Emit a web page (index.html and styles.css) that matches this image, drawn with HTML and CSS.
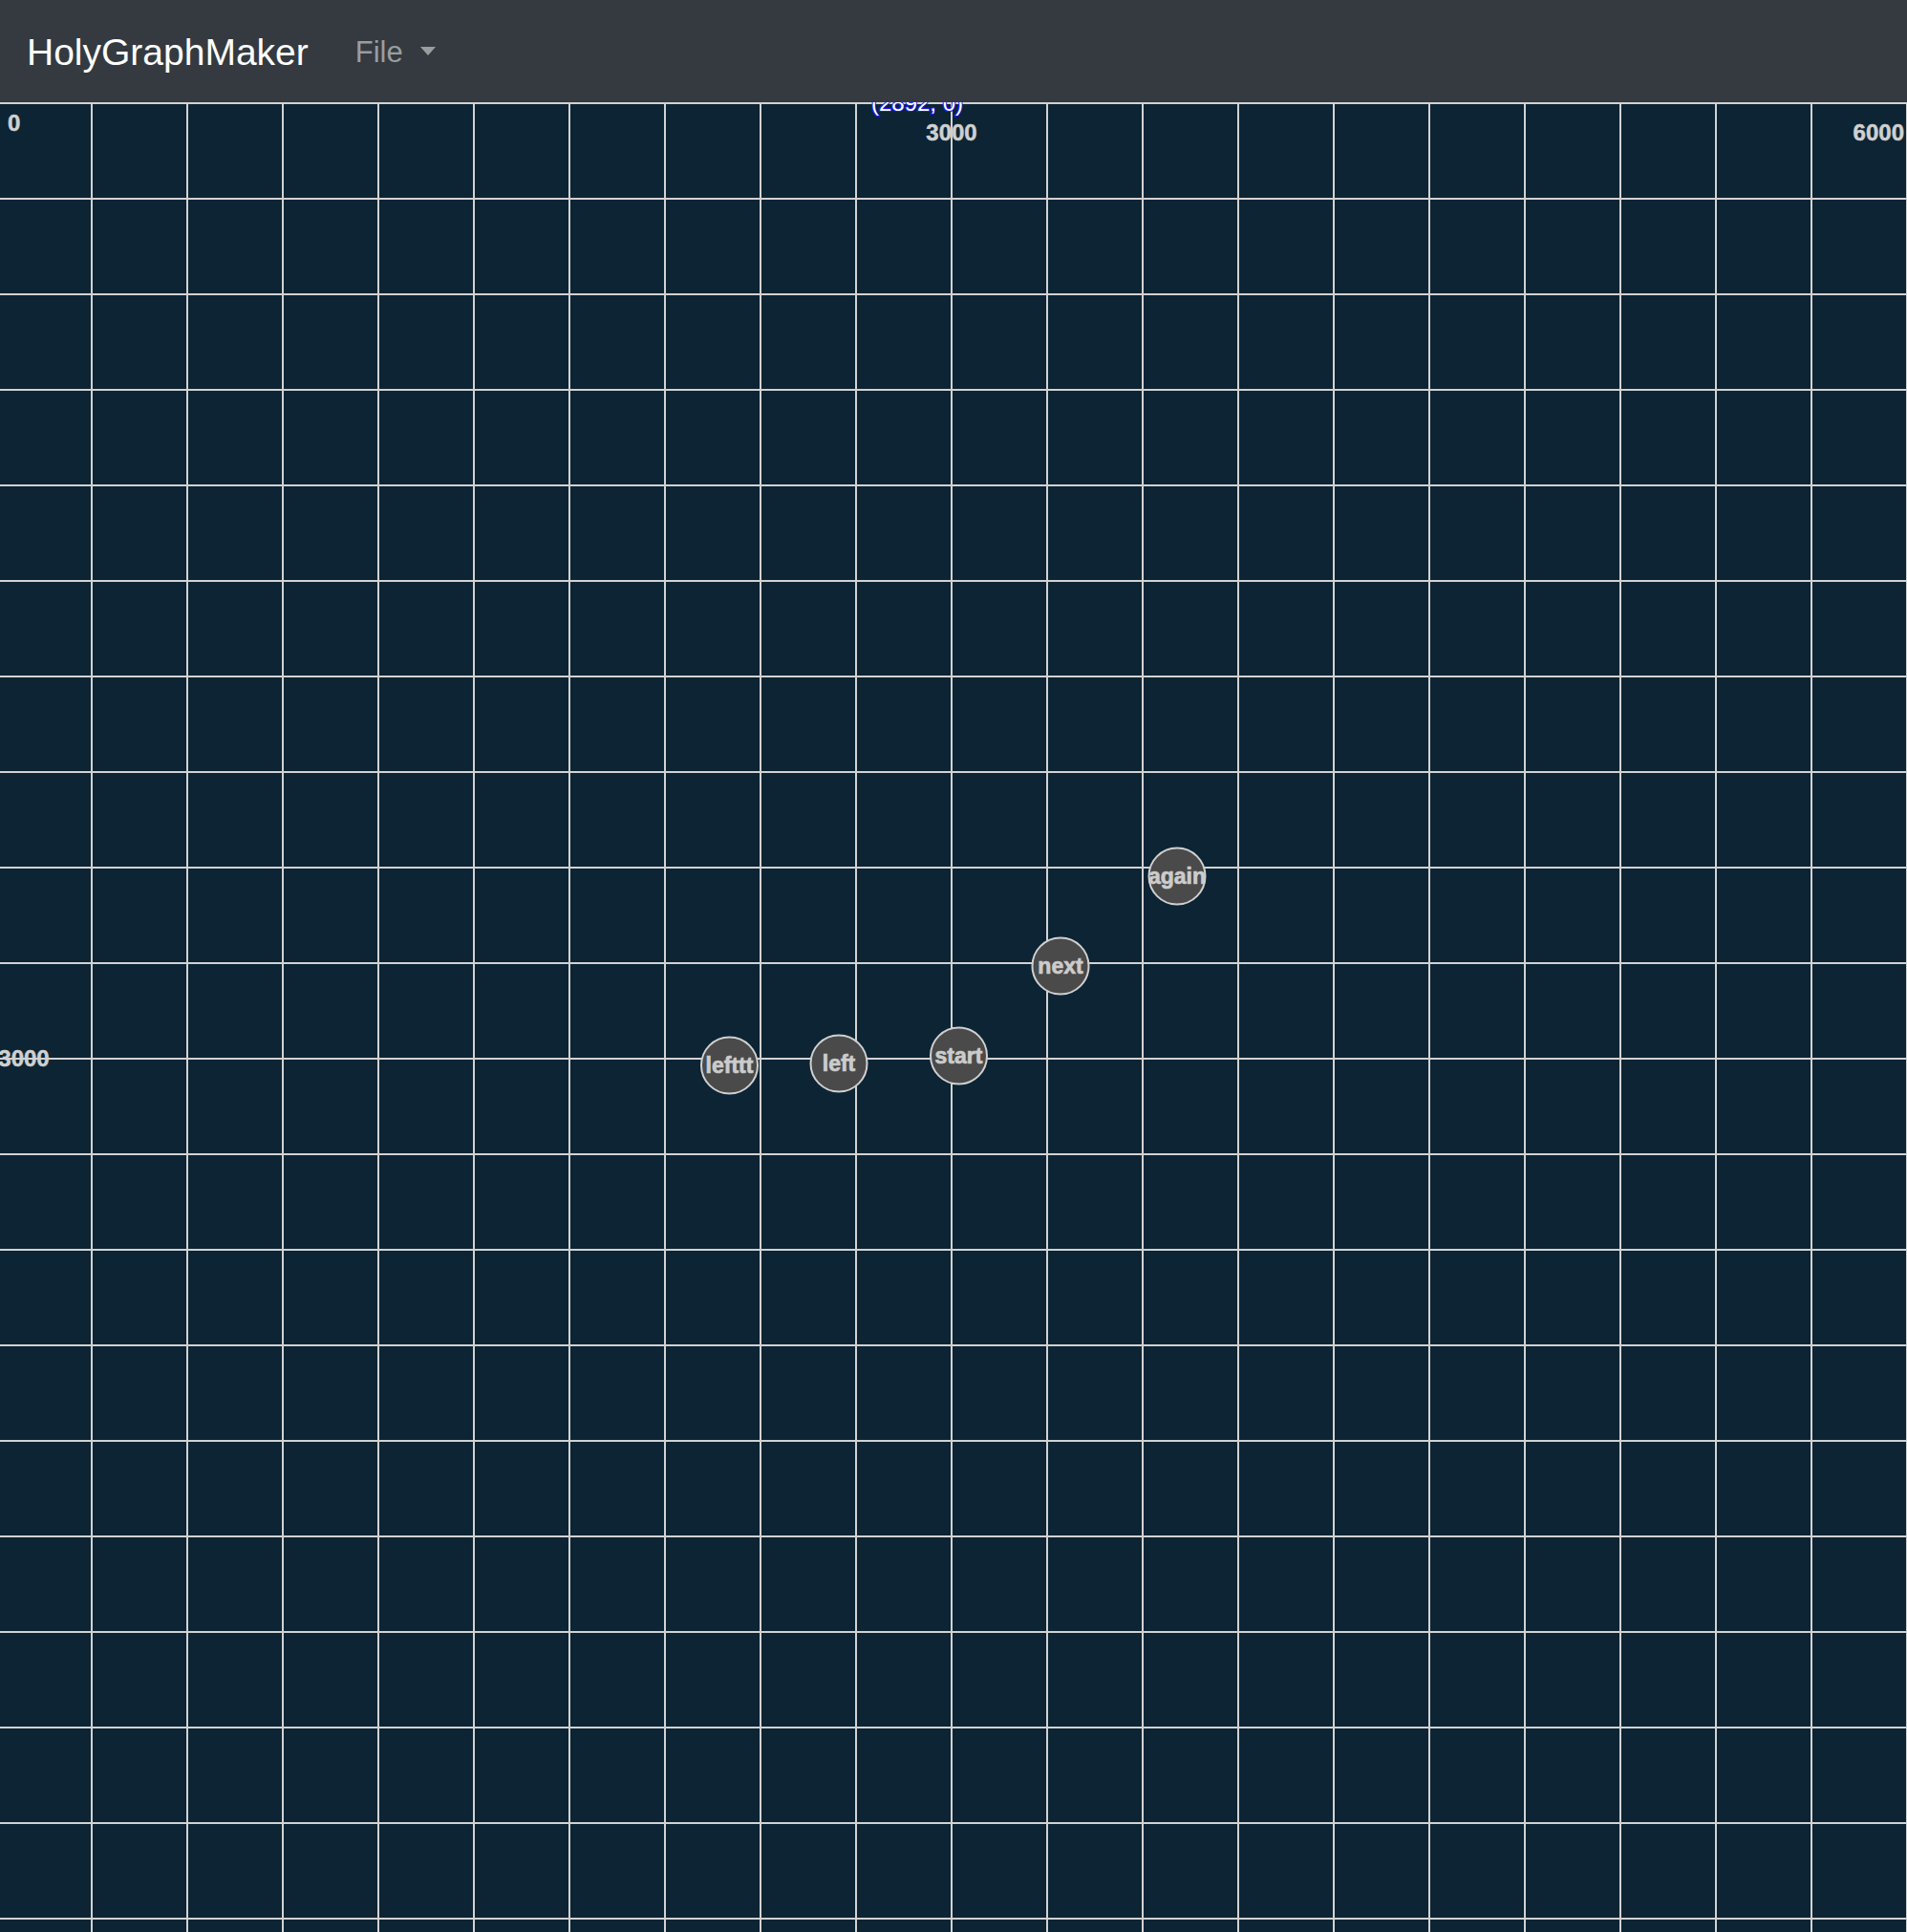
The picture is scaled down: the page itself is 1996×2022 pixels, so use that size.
FILE: index.html
```html
<!DOCTYPE html>
<html lang="en">
<head>
<meta charset="utf-8">
<title>HolyGraphMaker</title>
<link rel="stylesheet" href="styles.css">
</head>
<body>
<header class="navbar">
  <span class="brand">HolyGraphMaker</span>
  <span class="nav-link">File<span class="caret"></span></span>
</header>
<main class="canvas">
  <svg class="board" width="1996" height="1915" viewBox="0 0 1996 1915" xmlns="http://www.w3.org/2000/svg">
    <g id="grid" fill="#d2d2d2"></g>
    <g class="axis">
      <text x="8" y="30">0</text>
      <text x="996" y="40" text-anchor="middle">3000</text>
      <text x="1993" y="40" text-anchor="end">6000</text>
      <text x="25" y="1009" text-anchor="middle">3000</text>
    </g>
    <text class="coord" x="960" y="9" text-anchor="middle">(2892, 0)</text>
    <g class="nodes">
      <g class="node"><circle cx="763.5" cy="1008" r="29.5"/><text x="763.5" y="1008">lefttt</text></g>
      <g class="node"><circle cx="878" cy="1006" r="29.5"/><text x="878" y="1006">left</text></g>
      <g class="node"><circle cx="1003.5" cy="998" r="29.5"/><text x="1003.5" y="998">start</text></g>
      <g class="node"><circle cx="1110" cy="904" r="29.5"/><text x="1110" y="904">next</text></g>
      <g class="node"><circle cx="1232" cy="810" r="29.5"/><text x="1232" y="810">again</text></g>
    </g>
  </svg>
</main>
<script>
  (function () {
    var g = document.getElementById('grid');
    var html = '';
    for (var x = 95; x < 2000; x += 100) {
      html += '<rect x="' + x + '" y="0" width="2" height="1915"/>';
    }
    for (var y = 0; y < 1915; y += 100) {
      html += '<rect x="0" y="' + y + '" width="1996" height="2"/>';
    }
    g.innerHTML = html;
  })();
</script>
</body>
</html>
```
FILE: styles.css
```css
html, body {
  margin: 0;
  padding: 0;
  background: #0c2433;
}
body {
  width: 1996px;
  height: 2022px;
  overflow: hidden;
  font-family: "Liberation Sans", Arial, Helvetica, sans-serif;
}
.navbar {
  height: 107px;
  background: #343a40;
  display: flex;
  align-items: center;
  padding: 0 0 0 28px;
  box-sizing: border-box;
  position: relative;
  z-index: 2;
}
.brand {
  color: #ffffff;
  font-size: 39px;
  line-height: 1;
  margin-right: 49px;
  padding-top: 1px;
}
.nav-link {
  color: #9a9da0;
  font-size: 31px;
  line-height: 1;
  display: flex;
  align-items: center;
  padding-top: 2px;
}
.caret {
  display: inline-block;
  width: 0;
  height: 0;
  margin-left: 18px;
  margin-top: -3px;
  border-left: 8px solid transparent;
  border-right: 8px solid transparent;
  border-top: 9px solid #9a9da0;
}
.canvas {
  position: relative;
  height: 1915px;
  overflow: hidden;
  z-index: 1;
}
.board {
  display: block;
  overflow: hidden;
}
.axis text {
  font-family: "Liberation Sans", Arial, sans-serif;
  font-weight: bold;
  font-size: 24px;
  fill: #d0d0d0;
  stroke: #d0d0d0;
  stroke-width: 0.5;
}
.coord {
  font-family: "Liberation Sans", Arial, sans-serif;
  font-size: 24px;
  fill: #ffffff;
  stroke: #1a1aff;
  stroke-width: 2;
  paint-order: stroke;
}
.node circle {
  fill: #4a4a4a;
  stroke: #d0d0d0;
  stroke-width: 2;
}
.node text {
  font-family: "Liberation Sans", Arial, sans-serif;
  font-weight: bold;
  font-size: 23px;
  fill: #cccccc;
  stroke: #cccccc;
  stroke-width: 0.7;
  text-anchor: middle;
  dominant-baseline: central;
}
```
